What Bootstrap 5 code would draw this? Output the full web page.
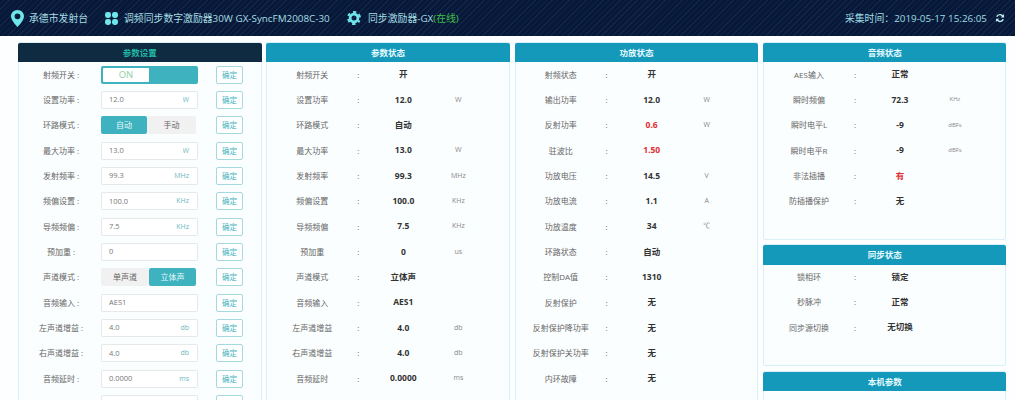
<!DOCTYPE html>
<html lang="zh-CN">
<head>
<meta charset="utf-8">
<title>参数设置</title>
<link href="https://cdn.jsdelivr.net/npm/bootstrap@5.3.0/dist/css/bootstrap.min.css" rel="stylesheet">
<style>
html,body{height:400px;overflow:hidden;}
body{background:#fdfeff;font-family:"Open Sans","Noto Sans CJK SC",sans-serif;font-size:8px;color:#444;}
.top-bar{height:36px;padding:1px 10px 0 11px;background-color:#07193a;background-image:repeating-linear-gradient(-45deg,rgba(255,255,255,.05) 0 1px,transparent 1px 4px);color:#a6dde2;font-size:9.85px;flex-wrap:nowrap;white-space:nowrap;}
.top-item{display:flex;align-items:center;}
.top-place{width:94px;}
.top-model{width:242px;}
.tb-ico{fill:#6fe6ec;flex:none;}
.gear-ring{fill:none;stroke:#6fe6ec;stroke-width:2.8;}
.gear-teeth{fill:none;stroke:#6fe6ec;stroke-width:2;stroke-dasharray:3.2 3.083;stroke-dashoffset:1.6;}
.gap-five{margin-right:5px;}
.gap-six{margin-right:6px;}
.gap-seven{margin-right:7px;}
.online{color:#3fc04a;}
.top-time{color:#9fdde2;}
.panel-wrap{padding:5.5px 0 0 18px;gap:4.83px;align-items:flex-start;}
.panel-col{width:243.5px;flex:none;}
.panel-box{background:#fbfeff;border:1px solid #d8f1f8;border-radius:2px;margin-bottom:4.5px;}
.panel-full{height:420px;}
.panel-a{height:198px;}
.panel-b{height:122px;}
.panel-c{height:60px;}
.panel-head{height:19.5px;margin:0 0 0 -1px;width:243.5px;padding:0;line-height:20px;text-align:center;font-size:8.5px;font-weight:700;color:#e8fbff;background:#1499bb;border:0;}
.panel-box>.panel-head:first-child{border-radius:2px 2px 0 0;}
.panel-head-dark{background:#0e2b42;color:#22b7a4;}
.panel-body{padding:0;}
.stat-row{display:grid;grid-template-columns:76px 16px 74px 36px;margin-left:7px;height:25.33px;align-items:center;text-align:center;color:#666;}
.stat-val{font-weight:700;color:#333;font-size:8.5px;}
.stat-bad{color:#e22d33;}
.stat-unit{font-size:7px;color:#888;}
.stat-tiny{font-size:6px;}
.set-row{height:25.33px;}
.set-label{width:82px;padding-left:2px;text-align:center;color:#666;flex:none;}
.set-ctl{width:97px;flex:none;height:18px;}
.set-field .form-control,.set-field .input-group-text{height:18px;min-height:0;font-size:7.5px;line-height:16px;padding:0 0 1px 7px;border-color:#e6e9ea;background:#fff;color:#777;border-radius:2px;box-shadow:none;}
.set-field .form-control{border-right:0;border-top-right-radius:0;border-bottom-right-radius:0;}
.set-field .input-group-text{padding:0 8px 0 0;border-left:0;color:#6db9c2;font-size:7px;border-top-left-radius:0;border-bottom-left-radius:0;margin-left:0!important;}
.ok-btn{width:27px;height:18px;margin-left:18px;padding:0;font-size:7.5px;line-height:16px;color:#44b4bd;border:1px solid #a4dade;border-radius:2px;background:#fff;flex:none;}
.flip-track{background:#3fb2bf;border-radius:2px;padding:2px;}
.flip-knob{width:46px;height:100%;line-height:14px;text-align:center;font-size:9.5px;background:#fff;color:#8fcfa8;border-radius:1px;}
.seg-opt{height:18px;width:46px;line-height:18px;padding:0;font-size:8px;border:0;border-radius:2px;background:#f1f1f1;color:#666;}
.seg-opt+.seg-opt{width:49px;}
.seg-opt:first-child:not(.seg-on){width:48px;}
.seg-opt+.seg-on{width:47px;}
.seg-on{background:#3fb2bf;color:#e6fbfc;}
</style>
</head>
<body>
<nav class="navbar top-bar d-flex justify-content-between">
  <div class="d-flex align-items-center">
    <div class="top-item top-place">
      <svg class="tb-ico gap-five" width="13" height="17" viewBox="0 0 13 17"><path fill-rule="evenodd" d="M6.5 0C2.9 0 0 2.8 0 6.3 0 10.4 6.5 17 6.5 17S13 10.4 13 6.3C13 2.8 10.1 0 6.500 0zm0 3.400a2.900 2.900 0 1 1 0 5.800 2.900 2.900 0 0 1 0-5.800z"/></svg>
      <span>承德市发射台</span>
    </div>
    <div class="top-item top-model">
      <svg class="tb-ico gap-six" width="13" height="13" viewBox="0 0 13 13"><rect x="0" y="0" width="6" height="6" rx="2.4"/><rect x="7" y="0" width="6" height="6" rx="2.4"/><rect x="0" y="7" width="6" height="6" rx="2.4"/><rect x="7" y="7" width="6" height="6" rx="2.4"/></svg>
      <span>调频同步数字激励器30W GX-SyncFM2008C-30</span>
    </div>
    <div class="top-item">
      <svg class="tb-ico gap-seven" width="14" height="14" viewBox="0 0 14 14"><circle class="gear-ring" cx="7" cy="7" r="3.9"/><circle class="gear-teeth" cx="7" cy="7" r="6" transform="rotate(30 7 7)"/></svg>
      <span>同步激励器-GX<span class="online">(在线)</span></span>
    </div>
  </div>
  <div class="top-item top-time">
    <span>采集时间：2019-05-17 15:26:05</span>
    <svg class="ms-2" width="10" height="10" viewBox="0 0 16 16" fill="#bfeef2"><path d="M8 1.500a6.500 6.500 0 0 1 4.700 2L14.500 1.700V7h-5.300l1.800-1.800A4.200 4.200 0 0 0 3.900 6.300L1.700 5.700A6.500 6.500 0 0 1 8 1.500zM1.500 9h5.300l-1.800 1.800a4.200 4.200 0 0 0 7.100-1.100l2.200.6A6.500 6.500 0 0 1 3.300 12.500L1.500 14.300z"/></svg>
  </div>
</nav>

<main class="d-flex panel-wrap">
  <section class="panel-col">
    <div class="card panel-box panel-full">
      <div class="card-header panel-head panel-head-dark">参数设置</div>
      <div class="card-body panel-body">
        <div class="d-flex align-items-center set-row"><span class="set-label">射频开关 :</span><div class="set-ctl flip-track"><div class="flip-knob">ON</div></div><button class="btn ok-btn">确定</button></div>
        <div class="d-flex align-items-center set-row"><span class="set-label">设置功率 :</span><div class="input-group set-ctl set-field"><input class="form-control" value="12.0"><span class="input-group-text">W</span></div><button class="btn ok-btn">确定</button></div>
        <div class="d-flex align-items-center set-row"><span class="set-label">环路模式 :</span><div class="d-flex set-ctl"><button class="btn seg-opt seg-on">自动</button><button class="btn seg-opt">手动</button></div><button class="btn ok-btn">确定</button></div>
        <div class="d-flex align-items-center set-row"><span class="set-label">最大功率 :</span><div class="input-group set-ctl set-field"><input class="form-control" value="13.0"><span class="input-group-text">W</span></div><button class="btn ok-btn">确定</button></div>
        <div class="d-flex align-items-center set-row"><span class="set-label">发射频率 :</span><div class="input-group set-ctl set-field"><input class="form-control" value="99.3"><span class="input-group-text">MHz</span></div><button class="btn ok-btn">确定</button></div>
        <div class="d-flex align-items-center set-row"><span class="set-label">频偏设置 :</span><div class="input-group set-ctl set-field"><input class="form-control" value="100.0"><span class="input-group-text">KHz</span></div><button class="btn ok-btn">确定</button></div>
        <div class="d-flex align-items-center set-row"><span class="set-label">导频频偏 :</span><div class="input-group set-ctl set-field"><input class="form-control" value="7.5"><span class="input-group-text">KHz</span></div><button class="btn ok-btn">确定</button></div>
        <div class="d-flex align-items-center set-row"><span class="set-label">预加重 :</span><div class="input-group set-ctl set-field"><input class="form-control" value="0"><span class="input-group-text"></span></div><button class="btn ok-btn">确定</button></div>
        <div class="d-flex align-items-center set-row"><span class="set-label">声道模式 :</span><div class="d-flex set-ctl"><button class="btn seg-opt">单声道</button><button class="btn seg-opt seg-on">立体声</button></div><button class="btn ok-btn">确定</button></div>
        <div class="d-flex align-items-center set-row"><span class="set-label">音频输入 :</span><div class="input-group set-ctl set-field"><input class="form-control" value="AES1"><span class="input-group-text"></span></div><button class="btn ok-btn">确定</button></div>
        <div class="d-flex align-items-center set-row"><span class="set-label">左声道增益 :</span><div class="input-group set-ctl set-field"><input class="form-control" value="4.0"><span class="input-group-text">db</span></div><button class="btn ok-btn">确定</button></div>
        <div class="d-flex align-items-center set-row"><span class="set-label">右声道增益 :</span><div class="input-group set-ctl set-field"><input class="form-control" value="4.0"><span class="input-group-text">db</span></div><button class="btn ok-btn">确定</button></div>
        <div class="d-flex align-items-center set-row"><span class="set-label">音频延时 :</span><div class="input-group set-ctl set-field"><input class="form-control" value="0.0000"><span class="input-group-text">ms</span></div><button class="btn ok-btn">确定</button></div>
        <div class="d-flex align-items-center set-row"><span class="set-label"></span><div class="input-group set-ctl set-field"><input class="form-control" value=""><span class="input-group-text"></span></div><button class="btn ok-btn"></button></div>
      </div>
    </div>
  </section>

  <section class="panel-col">
    <div class="card panel-box panel-full">
      <div class="card-header panel-head">参数状态</div>
      <div class="card-body panel-body">
        <div class="stat-row"><span>射频开关</span><span>:</span><span class="stat-val">开</span><span class="stat-unit"></span></div>
        <div class="stat-row"><span>设置功率</span><span>:</span><span class="stat-val">12.0</span><span class="stat-unit">W</span></div>
        <div class="stat-row"><span>环路模式</span><span>:</span><span class="stat-val">自动</span><span class="stat-unit"></span></div>
        <div class="stat-row"><span>最大功率</span><span>:</span><span class="stat-val">13.0</span><span class="stat-unit">W</span></div>
        <div class="stat-row"><span>发射频率</span><span>:</span><span class="stat-val">99.3</span><span class="stat-unit">MHz</span></div>
        <div class="stat-row"><span>频偏设置</span><span>:</span><span class="stat-val">100.0</span><span class="stat-unit">KHz</span></div>
        <div class="stat-row"><span>导频频偏</span><span>:</span><span class="stat-val">7.5</span><span class="stat-unit">KHz</span></div>
        <div class="stat-row"><span>预加重</span><span>:</span><span class="stat-val">0</span><span class="stat-unit">us</span></div>
        <div class="stat-row"><span>声道模式</span><span>:</span><span class="stat-val">立体声</span><span class="stat-unit"></span></div>
        <div class="stat-row"><span>音频输入</span><span>:</span><span class="stat-val">AES1</span><span class="stat-unit"></span></div>
        <div class="stat-row"><span>左声道增益</span><span>:</span><span class="stat-val">4.0</span><span class="stat-unit">db</span></div>
        <div class="stat-row"><span>右声道增益</span><span>:</span><span class="stat-val">4.0</span><span class="stat-unit">db</span></div>
        <div class="stat-row"><span>音频延时</span><span>:</span><span class="stat-val">0.0000</span><span class="stat-unit">ms</span></div>
      </div>
    </div>
  </section>

  <section class="panel-col">
    <div class="card panel-box panel-full">
      <div class="card-header panel-head">功放状态</div>
      <div class="card-body panel-body">
        <div class="stat-row"><span>射频状态</span><span>:</span><span class="stat-val">开</span><span class="stat-unit"></span></div>
        <div class="stat-row"><span>输出功率</span><span>:</span><span class="stat-val">12.0</span><span class="stat-unit">W</span></div>
        <div class="stat-row"><span>反射功率</span><span>:</span><span class="stat-val stat-bad">0.6</span><span class="stat-unit">W</span></div>
        <div class="stat-row"><span>驻波比</span><span>:</span><span class="stat-val stat-bad">1.50</span><span class="stat-unit"></span></div>
        <div class="stat-row"><span>功放电压</span><span>:</span><span class="stat-val">14.5</span><span class="stat-unit">V</span></div>
        <div class="stat-row"><span>功放电流</span><span>:</span><span class="stat-val">1.1</span><span class="stat-unit">A</span></div>
        <div class="stat-row"><span>功放温度</span><span>:</span><span class="stat-val">34</span><span class="stat-unit">℃</span></div>
        <div class="stat-row"><span>环路状态</span><span>:</span><span class="stat-val">自动</span><span class="stat-unit"></span></div>
        <div class="stat-row"><span>控制DA值</span><span>:</span><span class="stat-val">1310</span><span class="stat-unit"></span></div>
        <div class="stat-row"><span>反射保护</span><span>:</span><span class="stat-val">无</span><span class="stat-unit"></span></div>
        <div class="stat-row"><span>反射保护降功率</span><span>:</span><span class="stat-val">无</span><span class="stat-unit"></span></div>
        <div class="stat-row"><span>反射保护关功率</span><span>:</span><span class="stat-val">无</span><span class="stat-unit"></span></div>
        <div class="stat-row"><span>内环故障</span><span>:</span><span class="stat-val">无</span><span class="stat-unit"></span></div>
      </div>
    </div>
  </section>

  <section class="panel-col">
    <div class="card panel-box panel-a">
      <div class="card-header panel-head">音频状态</div>
      <div class="card-body panel-body">
        <div class="stat-row"><span>AES输入</span><span>:</span><span class="stat-val">正常</span><span class="stat-unit"></span></div>
        <div class="stat-row"><span>瞬时频偏</span><span>:</span><span class="stat-val">72.3</span><span class="stat-unit stat-tiny">KHz</span></div>
        <div class="stat-row"><span>瞬时电平L</span><span>:</span><span class="stat-val">-9</span><span class="stat-unit stat-tiny">dBFs</span></div>
        <div class="stat-row"><span>瞬时电平R</span><span>:</span><span class="stat-val">-9</span><span class="stat-unit stat-tiny">dBFs</span></div>
        <div class="stat-row"><span>非法插播</span><span>:</span><span class="stat-val stat-bad">有</span><span class="stat-unit"></span></div>
        <div class="stat-row"><span>防插播保护</span><span>:</span><span class="stat-val">无</span><span class="stat-unit"></span></div>
      </div>
    </div>
    <div class="card panel-box panel-b">
      <div class="card-header panel-head">同步状态</div>
      <div class="card-body panel-body">
        <div class="stat-row"><span>锁相环</span><span>:</span><span class="stat-val">锁定</span><span class="stat-unit"></span></div>
        <div class="stat-row"><span>秒脉冲</span><span>:</span><span class="stat-val">正常</span><span class="stat-unit"></span></div>
        <div class="stat-row"><span>同步源切换</span><span>:</span><span class="stat-val">无切换</span><span class="stat-unit"></span></div>
      </div>
    </div>
    <div class="card panel-box panel-c">
      <div class="card-header panel-head">本机参数</div>
    </div>
  </section>
</main>
<script src="https://cdn.jsdelivr.net/npm/bootstrap@5.3.0/dist/js/bootstrap.bundle.min.js"></script>
</body>
</html>
